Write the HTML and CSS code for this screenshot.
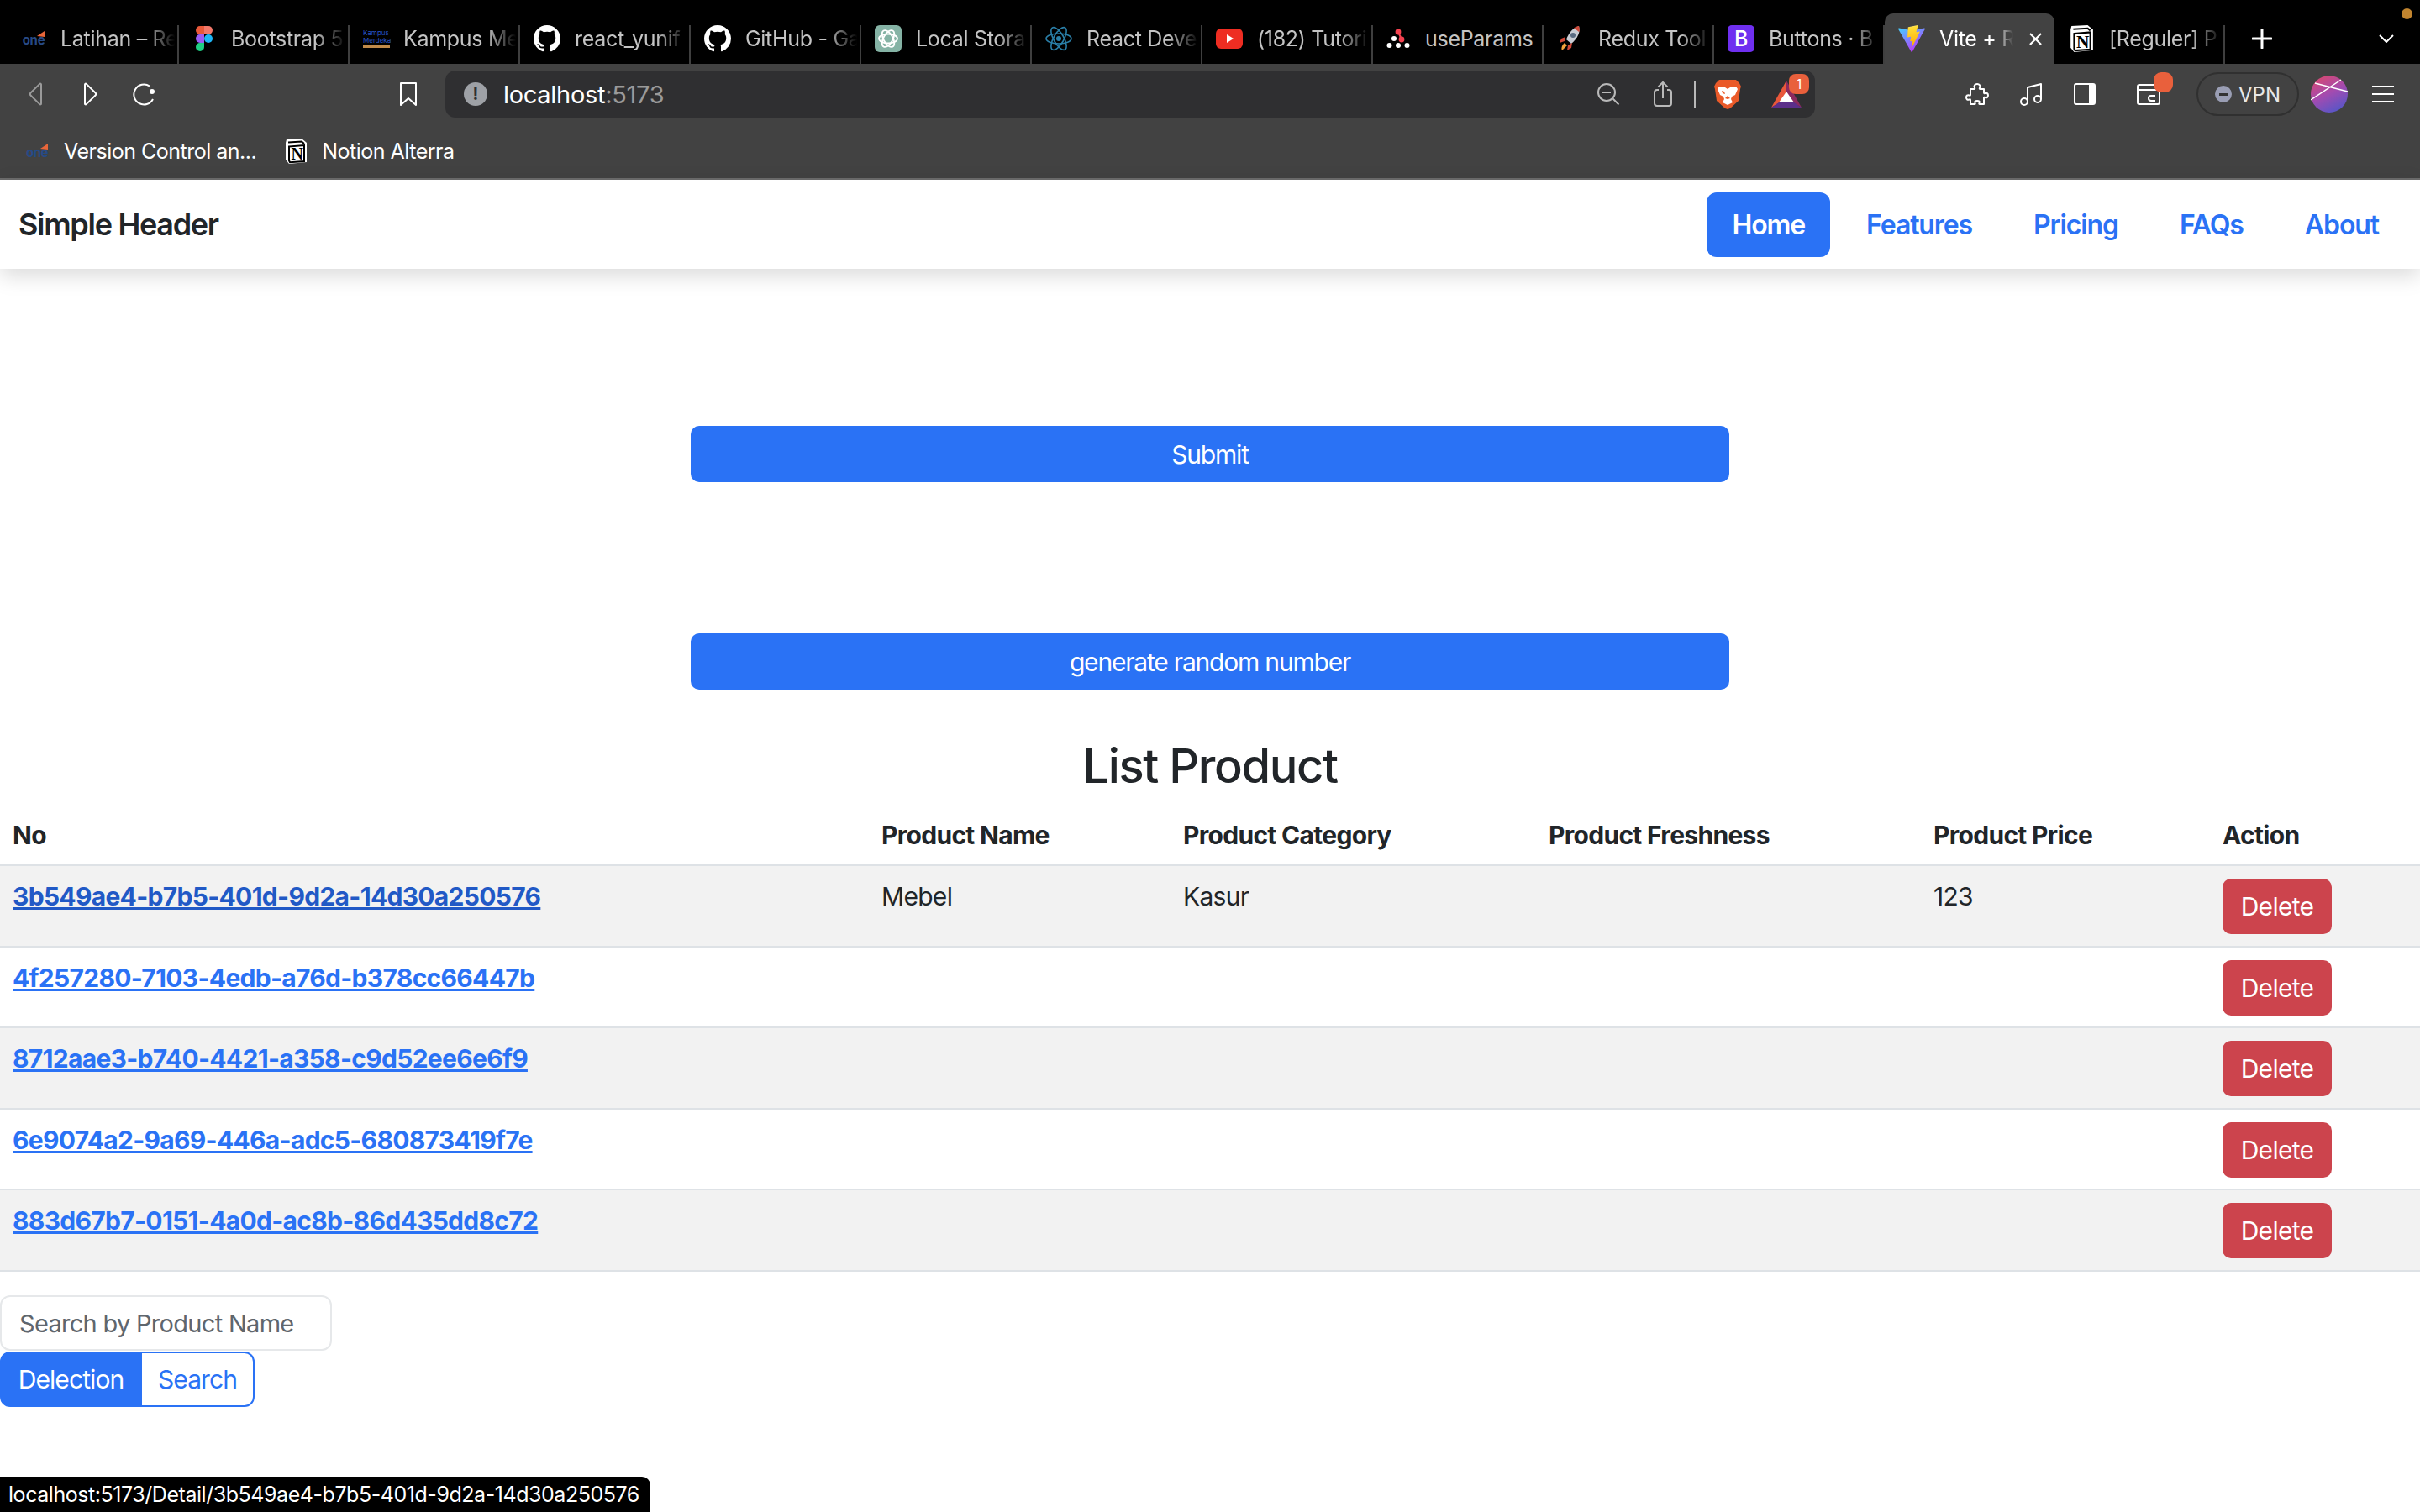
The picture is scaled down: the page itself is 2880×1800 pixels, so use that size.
FILE: index.html
```html
<!DOCTYPE html>
<html lang="en">
<head>
    <meta charset="UTF-8">
    <title>Vite + React</title>
    <link rel="stylesheet" href="styles.css">
</head>
<body>
    <svg class="defs" width="0" height="0">
        <defs>
            <symbol id="ic-github" viewBox="0 0 16 16">
                <path fill="#fff" d="M8 0C3.58 0 0 3.58 0 8c0 3.54 2.29 6.53 5.47 7.59.4.07.55-.17.55-.38 0-.19-.01-.82-.01-1.49-2.01.37-2.53-.49-2.69-.94-.09-.23-.48-.94-.82-1.13-.28-.15-.68-.52-.01-.53.63-.01 1.08.58 1.23.82.72 1.21 1.87.87 2.33.66.07-.52.28-.87.51-1.07-1.78-.2-3.64-.89-3.64-3.95 0-.87.31-1.59.82-2.15-.08-.2-.36-1.02.08-2.12 0 0 .67-.21 2.2.82.64-.18 1.32-.27 2-.27.68 0 1.36.09 2 .27 1.53-1.04 2.2-.82 2.2-.82.44 1.1.16 1.92.08 2.12.51.56.82 1.27.82 2.15 0 3.07-1.87 3.75-3.65 3.95.29.25.54.73.54 1.48 0 1.07-.01 1.93-.01 2.2 0 .21.15.46.55.38A8.013 8.013 0 0016 8c0-4.42-3.58-8-8-8z"/>
            </symbol>
            <symbol id="ic-notion" viewBox="0 0 28 30">
                <path fill="#fff" d="M3 1l18-1 6 5v23l-21 2-4-5V5z"/>
                <path fill="none" stroke="#000" stroke-width="2" d="M5 4.500l16-1 3 2.500M6 9.500l18-1.500v19l-17 1.300-1-2z"/>
                <text x="15.500" y="25" class="notion-n" text-anchor="middle">N</text>
            </symbol>
            <symbol id="ic-one" viewBox="0 0 28 20">
                <path fill="#e8663a" d="M18 7l9-6v7z"/>
                <text x="14" y="17" class="one-text" text-anchor="middle">one</text>
            </symbol>
        </defs>
    </svg>

    <div class="tabstrip">
        <div class="tab"><svg class="fav"><use href="#ic-one"/></svg><span class="tab-title">Latihan – Re</span></div>
        <div class="tab">
            <svg class="fav fav-tall" viewBox="0 0 28 42">
                <path fill="#e8593a" d="M14 0H7a7 7 0 0 0 0 14h7z"/>
                <path fill="#f2786a" d="M14 0h7a7 7 0 0 1 0 14h-7z"/>
                <path fill="#9a5cf5" d="M14 14H7a7 7 0 0 0 0 14h7z"/>
                <circle fill="#1eb6f7" cx="21" cy="21" r="7"/>
                <path fill="#1fcf83" d="M7 28h7v7a7 7 0 1 1-7-7z"/>
            </svg>
            <span class="tab-title">Bootstrap 5</span>
        </div>
        <div class="tab">
            <span class="fav kampus"><span class="kampus-text">Kampus<br>Merdeka</span><span class="kampus-bar"></span></span>
            <span class="tab-title">Kampus Me</span>
        </div>
        <div class="tab"><svg class="fav fav-big"><use href="#ic-github"/></svg><span class="tab-title">react_yunif</span></div>
        <div class="tab"><svg class="fav fav-big"><use href="#ic-github"/></svg><span class="tab-title">GitHub - Ga</span></div>
        <div class="tab">
            <svg class="fav fav-big" viewBox="0 0 32 32">
                <rect width="32" height="32" rx="6" fill="#85b3a5"/>
                <g fill="none" stroke="#fff" stroke-width="1.8">
                    <ellipse cx="16" cy="16" rx="11" ry="5.5"/>
                    <ellipse cx="16" cy="16" rx="11" ry="5.5" transform="rotate(60 16 16)"/>
                    <ellipse cx="16" cy="16" rx="11" ry="5.5" transform="rotate(120 16 16)"/>
                </g>
            </svg>
            <span class="tab-title">Local Stora</span>
        </div>
        <div class="tab">
            <svg class="fav fav-big" viewBox="0 0 32 32">
                <g fill="none" stroke="#2a7fa8" stroke-width="1.6">
                    <ellipse cx="16" cy="16" rx="15" ry="6"/>
                    <ellipse cx="16" cy="16" rx="15" ry="6" transform="rotate(60 16 16)"/>
                    <ellipse cx="16" cy="16" rx="15" ry="6" transform="rotate(120 16 16)"/>
                </g>
                <circle cx="16" cy="16" r="3" fill="#2a7fa8"/>
            </svg>
            <span class="tab-title">React Deve</span>
        </div>
        <div class="tab">
            <svg class="fav fav-big" viewBox="0 0 32 32">
                <rect y="4" width="32" height="24" rx="6" fill="#ee2d22"/>
                <path fill="#fff" d="M13 11l8 5-8 5z"/>
            </svg>
            <span class="tab-title">(182) Tutori</span>
        </div>
        <div class="tab">
            <svg class="fav" viewBox="0 0 28 28">
                <circle cx="14" cy="6" r="3.4" fill="#f44250"/>
                <circle cx="9" cy="14" r="3" fill="#fff"/>
                <circle cx="18" cy="15" r="3.4" fill="#f44250"/>
                <circle cx="3.5" cy="22" r="3" fill="#fff"/>
                <circle cx="14" cy="22" r="3" fill="#fff"/>
                <circle cx="24.5" cy="22" r="3" fill="#fff"/>
                <path fill="none" stroke="#f44250" stroke-width="2" d="M14 6l4 9"/>
            </svg>
            <span class="tab-title tab-title-full">useParams</span>
        </div>
        <div class="tab">
            <svg class="fav fav-big" viewBox="0 0 32 32">
                <path fill="#c9ccd4" d="M26 1c2 7-1 14-9 21l-6-5C14 9 19 3 26 1z"/>
                <circle cx="19" cy="12" r="3" fill="#5a6b82"/>
                <path fill="#d04a3a" d="M26 1c.8 2.3.9 4.8.4 7.2L20 3.200C22 2.100 24 1.400 26 1zM10 14l-5 2-2 5 6-2zM18 21l-1 6-5 3 1-6z"/>
                <path fill="#f3a33c" d="M9 21l3 3-6 6c-1.500-2 0-7 3-9z"/>
            </svg>
            <span class="tab-title">Redux Tool</span>
        </div>
        <div class="tab"><span class="fav fav-big bs-icon">B</span><span class="tab-title">Buttons · B</span></div>
        <div class="tab tab-active">
            <svg class="fav fav-big" viewBox="0 0 256 257">
                <defs>
                    <linearGradient id="vite-a" x1="0" y1="0" x2="0.6" y2="1">
                        <stop offset="0" stop-color="#41d1ff"/>
                        <stop offset="1" stop-color="#bd34fe"/>
                    </linearGradient>
                    <linearGradient id="vite-b" x1="0.4" y1="0" x2="0.5" y2="1">
                        <stop offset="0" stop-color="#ffea83"/>
                        <stop offset="0.1" stop-color="#ffdd35"/>
                        <stop offset="1" stop-color="#ffa800"/>
                    </linearGradient>
                </defs>
                <path fill="url(#vite-a)" d="M255.153 37.938 134.897 252.976c-2.483 4.44-8.862 4.466-11.382.048L.875 37.958c-2.746-4.814 1.371-10.646 6.827-9.67l120.385 21.517a6.537 6.537 0 0 0 2.322-.004l117.867-21.483c5.438-.991 9.574 4.796 6.877 9.62Z"/>
                <path fill="url(#vite-b)" d="M185.432.063 96.44 17.501a3.268 3.268 0 0 0-2.634 3.014l-5.474 92.456a3.268 3.268 0 0 0 3.997 3.378l24.777-5.718c2.318-.535 4.413 1.507 3.936 3.838l-7.361 36.047c-.495 2.426 1.782 4.5 4.151 3.78l15.304-4.649c2.372-.72 4.652 1.36 4.15 3.788l-11.698 56.621c-.732 3.542 3.979 5.473 5.943 2.437l1.313-2.028 72.516-144.72c1.215-2.423-.88-5.186-3.54-4.672l-25.505 4.922c-2.396.462-4.435-1.77-3.759-4.114l16.646-57.705c.677-2.35-1.37-4.583-3.769-4.113Z"/>
            </svg>
            <span class="tab-title">Vite + R</span>
            <svg class="tab-close" viewBox="0 0 16 16"><path d="M1 1l14 14M15 1L1 15"/></svg>
        </div>
        <div class="tab"><svg class="fav fav-big"><use href="#ic-notion"/></svg><span class="tab-title">[Reguler] P</span></div>
        <svg class="new-tab" viewBox="0 0 24 24"><path d="M12 1v22M1 12h22"/></svg>
        <svg class="tab-list" viewBox="0 0 18 10"><path d="M1 1l8 8 8-8"/></svg>
        <span class="cam-dot"></span>
    </div>

    <div class="toolbar">
        <div class="tb-btn tb-dim">
            <svg class="tb-icon" viewBox="0 0 28 28"><path d="M20 2.500v23c0 1-1 1.200-1.700.6L7.500 15.500c-1-1-1-2 0-3L18.300 1.900c.7-.6 1.700-.4 1.700.6z"/></svg>
        </div>
        <div class="tb-btn">
            <svg class="tb-icon" viewBox="0 0 28 28"><path d="M8 2.500v23c0 1 1 1.200 1.700.6l10.800-10.600c1-1 1-2 0-3L9.700 1.900C9 1.300 8 1.500 8 2.500z"/></svg>
        </div>
        <div class="tb-btn">
            <svg class="tb-icon" viewBox="0 0 28 28"><path d="M25 20a12 12 0 1 1-4-15.500"/><circle class="tb-fill" cx="24" cy="11" r="3"/></svg>
        </div>
        <div class="tb-btn tb-bookmark">
            <svg class="tb-icon" viewBox="0 0 28 28"><path d="M5 1h18v26l-9-8-9 8z"/></svg>
        </div>

        <div class="address">
            <span class="site-info">!</span>
            <span class="url">localhost<span class="url-port">:5173</span></span>
            <svg class="addr-icon addr-zoom" viewBox="0 0 28 28"><circle cx="12" cy="12" r="10"/><path d="M7 12h10M19.500 19.500l7 7"/></svg>
            <svg class="addr-icon addr-share" viewBox="0 0 22 32"><path d="M6 11H4a3 3 0 0 0-3 3v13a3 3 0 0 0 3 3h14a3 3 0 0 0 3-3V14a3 3 0 0 0-3-3h-2M11 21V2M5.500 7.500L11 2l5.500 5.500"/></svg>
            <span class="addr-sep"></span>
            <svg class="brave" viewBox="0 0 32 36">
                <path fill="#ea5a29" d="M6 1h20l4 4 2 4-1 3-2 14-10 9-3 1-3-1-10-9L1 12 0 9l2-4z"/>
                <path fill="#fff" d="M6 9l7 1 3 2 3-2 7-1 2 3-3 7-4 2-1 3 2 4-6 3-6-3 2-4-1-3-4-2-3-7zM12 15l-3-1 1 3 3 1zM20 15l3-1-1 3-3 1zM13 23l3 1 3-1-3-3z"/>
            </svg>
            <span class="bat">
                <svg class="bat-icon" viewBox="0 0 36 32">
                    <path fill="#e9573a" d="M18 0L0 32l18-11z"/>
                    <path fill="#8b2a5f" d="M18 0l18 32-18-11z"/>
                    <path fill="#5c2f8a" d="M0 32h36L27 26H9z"/>
                    <path fill="#fff" d="M18 13l9 13H9z"/>
                </svg>
                <span class="bat-badge">1</span>
            </span>
        </div>

        <div class="tb-btn tb-puzzle">
            <svg class="tb-icon" viewBox="0 0 28 28"><path d="M6 8h4.500c.8 0 .9-.8.500-1.500-1.500-2.500.5-4.500 3-4.500s4.500 2 3 4.500c-.4.700-.3 1.500.5 1.500H22v4.500c0 .8.800.9 1.500.5 2-1 3.500 .5 3.500 2.500s-1.500 3.500-3.500 2.500c-.7-.4-1.500-.3-1.500.5V26h-5c-.8 0-.9-.8-.5-1.500 1-2-.5-2.500-2.500-2.500s-3.500.5-2.500 2.500c.4.700.3 1.500-.5 1.500H6v-5c0-.8-.8-.9-1.500-.5-2 1-3.500-.5-3.500-2.500s1.500-3.500 3.500-2.500c.7.400 1.500.3 1.500-.5z"/></svg>
        </div>
        <div class="tb-btn">
            <svg class="tb-icon" viewBox="0 0 28 28"><circle cx="6" cy="23" r="4"/><circle cx="22" cy="20" r="4"/><path d="M10 23V6l16-4v18"/></svg>
        </div>
        <div class="tb-btn">
            <svg class="tb-icon" viewBox="0 0 28 28"><rect x="2" y="2" width="24" height="24" rx="2"/><rect class="tb-fill" x="19" y="2" width="7" height="24"/></svg>
        </div>
        <div class="tb-btn tb-wallet">
            <svg class="tb-icon" viewBox="0 0 28 28"><rect x="1" y="3" width="26" height="23" rx="2"/><path d="M1 9h26M22 16h-5a3 3 0 0 0 0 6h5"/></svg>
            <span class="wallet-badge"></span>
        </div>
        <div class="vpn"><span class="vpn-dot"></span>VPN</div>
        <svg class="avatar" viewBox="0 0 44 44">
            <defs>
                <linearGradient id="avatar-grad" x1="0.2" y1="0" x2="0.7" y2="1">
                    <stop offset="0" stop-color="#d8486f"/>
                    <stop offset="0.5" stop-color="#a34bb0"/>
                    <stop offset="1" stop-color="#5556c8"/>
                </linearGradient>
            </defs>
            <circle cx="22" cy="22" r="22" fill="url(#avatar-grad)"/>
            <path fill="none" stroke="#fff" stroke-width="1.500" d="M5 9l39 10M36 5L0 29"/>
        </svg>
        <div class="hamburger"><span></span><span></span><span></span></div>
    </div>

    <div class="bookmarks">
        <div class="bookmark"><svg class="bm-icon"><use href="#ic-one"/></svg>Version Control an...</div>
        <div class="bookmark"><svg class="bm-icon bm-notion"><use href="#ic-notion"/></svg>Notion Alterra</div>
    </div>

    <nav class="navbar">
        <span class="brand">Simple Header</span>
        <ul class="nav-pills">
            <li><a class="nav-link active" href="#">Home</a></li>
            <li><a class="nav-link" href="#">Features</a></li>
            <li><a class="nav-link" href="#">Pricing</a></li>
            <li><a class="nav-link" href="#">FAQs</a></li>
            <li><a class="nav-link" href="#">About</a></li>
        </ul>
    </nav>

    <main class="content">
        <button class="btn-wide btn-submit">Submit</button>
        <button class="btn-wide btn-random">generate random number</button>
        <h2 class="list-title">List Product</h2>

        <table class="product-table">
            <colgroup>
                <col class="col-no">
                <col class="col-name">
                <col class="col-category">
                <col class="col-fresh">
                <col class="col-price">
                <col>
            </colgroup>
            <thead>
                <tr>
                    <th>No</th>
                    <th>Product Name</th>
                    <th>Product Category</th>
                    <th>Product Freshness</th>
                    <th>Product Price</th>
                    <th>Action</th>
                </tr>
            </thead>
            <tbody>
                <tr>
                    <td><a class="row-link hovered" href="#">3b549ae4-b7b5-401d-9d2a-14d30a250576</a></td>
                    <td>Mebel</td>
                    <td>Kasur</td>
                    <td></td>
                    <td>123</td>
                    <td><button class="btn-delete">Delete</button></td>
                </tr>
                <tr>
                    <td><a class="row-link" href="#">4f257280-7103-4edb-a76d-b378cc66447b</a></td>
                    <td></td><td></td><td></td><td></td>
                    <td><button class="btn-delete">Delete</button></td>
                </tr>
                <tr>
                    <td><a class="row-link" href="#">8712aae3-b740-4421-a358-c9d52ee6e6f9</a></td>
                    <td></td><td></td><td></td><td></td>
                    <td><button class="btn-delete">Delete</button></td>
                </tr>
                <tr>
                    <td><a class="row-link" href="#">6e9074a2-9a69-446a-adc5-680873419f7e</a></td>
                    <td></td><td></td><td></td><td></td>
                    <td><button class="btn-delete">Delete</button></td>
                </tr>
                <tr>
                    <td><a class="row-link" href="#">883d67b7-0151-4a0d-ac8b-86d435dd8c72</a></td>
                    <td></td><td></td><td></td><td></td>
                    <td><button class="btn-delete">Delete</button></td>
                </tr>
            </tbody>
        </table>

        <input class="search-input" type="text" placeholder="Search by Product Name">
        <div class="btn-group">
            <button class="group-btn group-selected">Delection</button>
            <button class="group-btn group-outline">Search</button>
        </div>
    </main>

    <div class="status-bubble">localhost:5173/Detail/3b549ae4-b7b5-401d-9d2a-14d30a250576</div>
</body>
</html>
```

FILE: styles.css
```css
* {
    box-sizing: border-box;
}

html, body {
    margin: 0;
    width: 2880px;
    height: 1800px;
    overflow: hidden;
}

body {
    position: relative;
    font-family: 'Inter', 'Liberation Sans', sans-serif;
    font-size: 32px;
    color: #212529;
    background: #fff;
}

.defs {
    position: absolute;
}

/* tab strip */
.tabstrip {
    position: relative;
    display: flex;
    align-items: flex-end;
    height: 76px;
    padding-left: 10px;
    background: #000;
}

.tab {
    display: flex;
    align-items: center;
    flex: none;
    width: 203px;
    height: 46px;
    padding-left: 16px;
    padding-bottom: 14px;
    border-right: 2px solid #3f3f3f;
    color: #c4c4c4;
    font-size: 25px;
    letter-spacing: -0.3px;
}

.tab-active {
    width: 202px;
    height: 60px;
    padding-bottom: 0;
    border-right: none;
    border-radius: 10px 10px 0 0;
    background: #424242;
    color: #fff;
}

.fav {
    flex: none;
    width: 28px;
    height: 28px;
    margin-right: 18px;
}

.fav-tall {
    height: 30px;
}

.fav-big {
    width: 32px;
    height: 32px;
    margin-right: 17px;
}

.tab-title {
    overflow: hidden;
    white-space: nowrap;
    flex: 1;
    -webkit-mask-image: linear-gradient(to right, #000 72%, transparent 98%);
    mask-image: linear-gradient(to right, #000 72%, transparent 98%);
}

.tab-title-full {
    -webkit-mask-image: none;
    mask-image: none;
}

.tab-active .tab-title {
    flex: none;
    width: 90px;
}

.tab-close {
    width: 15px;
    height: 15px;
    margin-left: 17px;
    fill: none;
    stroke: #fff;
    stroke-width: 2.400;
}

.one-text {
    font-size: 15px;
    font-weight: 700;
    fill: #274a86;
}

.notion-n {
    font-family: 'Liberation Serif', serif;
    font-size: 20px;
    font-weight: 700;
    fill: #000;
}

.kampus {
    display: flex;
    flex-direction: column;
    justify-content: center;
    width: 32px;
    margin-right: 16px;
}

.kampus-text {
    font-size: 8px;
    line-height: 9px;
    letter-spacing: 0;
    color: #2a55c8;
    white-space: nowrap;
}

.kampus-bar {
    height: 3px;
    margin-top: 1px;
    background: #c08a4a;
}

.bs-icon {
    display: flex;
    align-items: center;
    justify-content: center;
    border-radius: 5px;
    background: #6f2ff0;
    color: #fff;
    font-size: 25px;
    font-weight: 500;
}

.new-tab {
    flex: none;
    align-self: center;
    width: 24px;
    height: 24px;
    margin-top: 16px;
    margin-left: 32px;
    fill: none;
    stroke: #fff;
    stroke-width: 3;
    stroke-linecap: round;
}

.tab-list {
    flex: none;
    align-self: center;
    width: 18px;
    height: 10px;
    margin-top: 16px;
    margin-left: 127px;
    fill: none;
    stroke: #fff;
    stroke-width: 2;
}

.cam-dot {
    position: absolute;
    left: 2858px;
    top: 10px;
    width: 13px;
    height: 13px;
    border-radius: 50%;
    background: #c2852f;
}

/* toolbar */
.toolbar {
    display: flex;
    align-items: flex-start;
    height: 72px;
    padding-top: 8px;
    padding-left: 11px;
    background: #424242;
}

.tb-btn {
    position: relative;
    display: flex;
    align-items: center;
    justify-content: center;
    flex: none;
    width: 64px;
    height: 56px;
}

.tb-icon {
    width: 28px;
    height: 28px;
    fill: none;
    stroke: #fff;
    stroke-width: 2;
    stroke-linejoin: round;
}

.tb-fill {
    fill: #fff;
    stroke: none;
}

.tb-dim .tb-icon {
    stroke: #9a9a9a;
}

.tb-bookmark {
    margin-left: 251px;
    margin-right: 12px;
}

.address {
    display: flex;
    align-items: center;
    flex: none;
    width: 1630px;
    height: 56px;
    padding-left: 22px;
    border-radius: 12px;
    background: #2f2f31;
}

.site-info {
    display: flex;
    align-items: center;
    justify-content: center;
    flex: none;
    width: 28px;
    height: 28px;
    margin-right: 19px;
    border-radius: 50%;
    background: #9ea1a6;
    color: #2f2f31;
    font-size: 20px;
    font-weight: 700;
}

.url {
    flex: none;
    width: 1301px;
    color: #fff;
    font-size: 29px;
    letter-spacing: -0.3px;
}

.url-port {
    color: #9a9a9a;
}

.addr-icon {
    flex: none;
    fill: none;
    stroke: #b9b9b9;
    stroke-width: 2;
}

.addr-zoom {
    width: 28px;
    height: 28px;
}

.addr-share {
    width: 22px;
    height: 32px;
    margin-left: 40px;
}

.addr-sep {
    flex: none;
    width: 2px;
    height: 32px;
    margin-left: 26px;
    background: #b9b9b9;
}

.brave {
    flex: none;
    width: 32px;
    height: 36px;
    margin-left: 22px;
}

.bat {
    position: relative;
    display: block;
    flex: none;
    width: 36px;
    height: 32px;
    margin-left: 36px;
}

.bat-icon {
    display: block;
    width: 36px;
    height: 32px;
}

.bat-badge {
    position: absolute;
    left: 21px;
    top: -8px;
    width: 24px;
    height: 24px;
    border-radius: 8px;
    background: #e9603c;
    color: #fff;
    font-size: 16px;
    line-height: 24px;
    text-align: center;
}

.tb-puzzle {
    margin-left: 161px;
}

.tb-wallet {
    margin-left: 12px;
}

.wallet-badge {
    position: absolute;
    left: 38px;
    top: 2px;
    width: 23px;
    height: 24px;
    border-radius: 9px;
    background: #e9603c;
}

.vpn {
    display: flex;
    align-items: center;
    flex: none;
    width: 122px;
    height: 52px;
    margin-left: 25px;
    margin-top: 2px;
    padding-left: 20px;
    border: 2px solid #303030;
    border-radius: 26px;
    color: #e8e8e8;
    font-size: 24px;
}

.vpn-dot {
    display: flex;
    align-items: center;
    justify-content: center;
    width: 20px;
    height: 20px;
    margin-right: 8px;
    border-radius: 50%;
    background: #9a9eb4;
}

.vpn-dot::after {
    content: "";
    width: 10px;
    height: 3px;
    background: #333;
}

.avatar {
    flex: none;
    width: 44px;
    height: 44px;
    margin-left: 14px;
    margin-top: 6px;
}

.hamburger {
    display: flex;
    flex-direction: column;
    justify-content: space-between;
    flex: none;
    width: 26px;
    height: 20px;
    margin-left: 29px;
    margin-top: 18px;
}

.hamburger span {
    height: 2px;
    background: #fff;
}

/* bookmarks bar */
.bookmarks {
    display: flex;
    align-items: center;
    height: 66px;
    padding-left: 30px;
    background: #424242;
    border-bottom: 2px solid #6d6d6d;
    color: #fff;
    font-size: 25px;
    letter-spacing: -0.5px;
}

.bookmark {
    display: flex;
    align-items: center;
    margin-right: 33px;
}

.bm-icon {
    width: 28px;
    height: 20px;
    margin-right: 18px;
}

.bm-notion {
    height: 30px;
    margin-right: 17px;
}

/* page */
.navbar {
    position: relative;
    display: flex;
    align-items: center;
    justify-content: space-between;
    height: 106px;
    padding-left: 22px;
    padding-right: 19px;
    background: #fff;
    box-shadow: 0 8px 24px rgba(0, 0, 0, 0.15);
}

.brand {
    font-size: 36px;
    font-weight: 600;
    letter-spacing: -1.300px;
}

.nav-pills {
    display: flex;
    gap: 13px;
    margin: 0;
    padding: 0;
    list-style: none;
}

.nav-link {
    display: block;
    padding: 16px 30px;
    border-radius: 12px;
    color: #2a72f5;
    font-size: 32px;
    font-weight: 600;
    letter-spacing: -1.100px;
    line-height: 45px;
    text-decoration: none;
}

.nav-link.active {
    background: #2a72f5;
    color: #fff;
}

.content {
    display: flex;
    flex-direction: column;
}

.btn-wide {
    align-self: center;
    width: 1236px;
    height: 67px;
    border: none;
    border-radius: 10px;
    background: #2a72f5;
    color: #fff;
    font-family: inherit;
    font-size: 30px;
    letter-spacing: -1.200px;
}

.btn-submit {
    margin-top: 187px;
}

.btn-random {
    margin-top: 180px;
}

.list-title {
    margin: 53px 0 0;
    height: 76px;
    font-size: 56px;
    font-weight: 500;
    letter-spacing: -1.400px;
    line-height: 76px;
    text-align: center;
}

.product-table {
    width: 2880px;
    margin-top: 5px;
    table-layout: fixed;
    border-collapse: collapse;
    letter-spacing: -0.7px;
}

.col-no {
    width: 1034px;
}

.col-name {
    width: 359px;
}

.col-category {
    width: 435px;
}

.col-fresh {
    width: 458px;
}

.col-price {
    width: 344px;
}

.product-table th {
    height: 75px;
    padding: 18px 15px 14px;
    border-bottom: 2px solid #dee2e6;
    font-size: 30px;
    font-weight: 700;
    text-align: left;
}

.product-table td {
    height: 97px;
    padding: 15px 15px 13px;
    border-bottom: 2px solid #dee2e6;
    font-size: 30px;
    line-height: 42px;
    vertical-align: top;
}

.product-table tbody tr:nth-child(even) td {
    height: 96px;
}

.product-table tbody tr:nth-child(odd) {
    background: #f2f2f2;
}

.row-link {
    color: #2a72f5;
    font-weight: 700;
}

.row-link.hovered {
    color: #2159c6;
}

.btn-delete {
    display: block;
    width: 130px;
    height: 66px;
    border: none;
    border-radius: 10px;
    background: #cc444d;
    color: #fff;
    font-family: inherit;
    font-size: 30px;
    letter-spacing: -0.7px;
}

.search-input {
    width: 395px;
    height: 66px;
    margin-top: 28px;
    padding: 0 21px;
    border: 2px solid #e6e8ea;
    border-radius: 12px;
    font-family: inherit;
    font-size: 29px;
    letter-spacing: -0.7px;
}

.search-input::placeholder {
    color: #5f666d;
}

.btn-group {
    display: flex;
    margin-top: 1px;
}

.group-btn {
    height: 66px;
    padding: 0;
    font-family: inherit;
    font-size: 30px;
    letter-spacing: -0.9px;
}

.group-selected {
    width: 169px;
    border: 2px solid #2a72f5;
    border-radius: 12px 0 0 12px;
    background: #2a72f5;
    color: #fff;
}

.group-outline {
    width: 134px;
    border: 2px solid #2a72f5;
    border-left: none;
    border-radius: 0 12px 12px 0;
    background: #fff;
    color: #2a72f5;
}

.status-bubble {
    position: absolute;
    left: 0;
    bottom: 0;
    height: 42px;
    padding: 0 13px 0 10px;
    border-radius: 0 10px 0 0;
    background: #000;
    color: #fff;
    font-size: 25px;
    letter-spacing: -0.45px;
    line-height: 42px;
    white-space: nowrap;
}
```
